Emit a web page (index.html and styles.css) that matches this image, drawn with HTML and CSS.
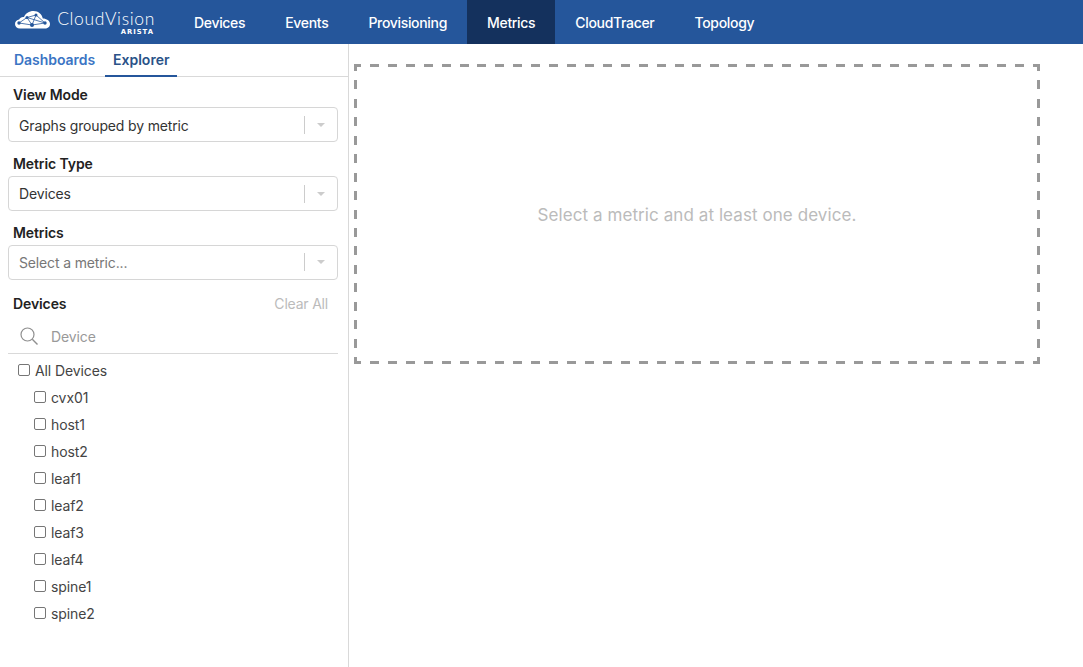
FILE: index.html
```html
<!DOCTYPE html>
<html lang="en">
<head>
<meta charset="utf-8">
<title>CloudVision Metrics</title>
<link rel="stylesheet" href="styles.css">
</head>
<body>
<header class="topbar">
  <div class="brand">
    <svg class="cloud" width="36" height="18" viewBox="0 0 36 18" aria-hidden="true">
      <path fill="#fff" d="M5 17.500C2 17.500 0 15.500 0 13C0 10.500 1.800 8.700 4.200 8.500C5 6.500 7 5.600 9 6C10.500 2.500 14 0 18.500 0C23.500 0 27 3.300 27.800 7.500C31.500 7.500 35 9.800 35 13C35 15.800 32.800 17.500 30 17.500Z"/>
      <path stroke="#25569b" stroke-width="0.800" fill="none" d="M4 12L12 6.500L21 4L17 14L4 12M12 6.500L17 14L30 12L21 4M12 6.500L30 12"/>
      <g fill="#25569b">
        <circle cx="4" cy="12" r="1.700"/>
        <circle cx="12" cy="6.500" r="1.500"/>
        <circle cx="21" cy="4" r="1.500"/>
        <circle cx="17" cy="14" r="2"/>
        <circle cx="30" cy="12" r="1.700"/>
      </g>
    </svg>
    <div class="wordmark">
      <span class="wordmark-name">CloudVision</span>
      <span class="wordmark-sub">ARISTA</span>
    </div>
  </div>
  <nav class="nav">
    <a class="nav-item">Devices</a>
    <a class="nav-item">Events</a>
    <a class="nav-item">Provisioning</a>
    <a class="nav-item nav-item-active">Metrics</a>
    <a class="nav-item">CloudTracer</a>
    <a class="nav-item">Topology</a>
  </nav>
</header>
<div class="main">
  <aside class="sidebar">
    <div class="tabs">
      <a class="tab tab-link">Dashboards</a>
      <a class="tab tab-active">Explorer</a>
    </div>
    <div class="field">
      <div class="field-label">View Mode</div>
      <div class="select"><span class="select-value">Graphs grouped by metric</span><span class="select-sep"></span><span class="select-arrow"></span></div>
    </div>
    <div class="field">
      <div class="field-label">Metric Type</div>
      <div class="select"><span class="select-value">Devices</span><span class="select-sep"></span><span class="select-arrow"></span></div>
    </div>
    <div class="field">
      <div class="field-label">Metrics</div>
      <div class="select"><span class="select-value select-placeholder">Select a metric...</span><span class="select-sep"></span><span class="select-arrow"></span></div>
    </div>
    <div class="devices-head">
      <span class="field-label">Devices</span>
      <span class="clear">Clear All</span>
    </div>
    <div class="search">
      <svg width="18" height="18" viewBox="0 0 18 18" aria-hidden="true"><circle cx="7.500" cy="7.500" r="6.500" fill="none" stroke="#8f8f8f" stroke-width="1.200"/><path d="M12.300 12.300L17.500 17.500" stroke="#8f8f8f" stroke-width="1.400" fill="none"/></svg>
      <span class="search-text">Device</span>
    </div>
    <ul class="tree">
      <li class="tree-row"><span class="check"></span>All Devices</li>
      <li class="tree-row tree-child"><span class="check"></span>cvx01</li>
      <li class="tree-row tree-child"><span class="check"></span>host1</li>
      <li class="tree-row tree-child"><span class="check"></span>host2</li>
      <li class="tree-row tree-child"><span class="check"></span>leaf1</li>
      <li class="tree-row tree-child"><span class="check"></span>leaf2</li>
      <li class="tree-row tree-child"><span class="check"></span>leaf3</li>
      <li class="tree-row tree-child"><span class="check"></span>leaf4</li>
      <li class="tree-row tree-child"><span class="check"></span>spine1</li>
      <li class="tree-row tree-child"><span class="check"></span>spine2</li>
    </ul>
  </aside>
  <main class="content">
    <div class="dropzone">Select a metric and at least one device.</div>
  </main>
</div>
</body>
</html>
```

FILE: styles.css
```css
* { box-sizing: border-box; }
html, body { margin: 0; height: 100%; }
body {
  font-family: Inter, "Liberation Sans", sans-serif;
  font-size: 14px;
  color: #333;
  background: #fff;
  display: flex;
  flex-direction: column;
  overflow: hidden;
}
.topbar {
  height: 44px;
  flex: none;
  background: #25569b;
  display: flex;
  color: #fff;
}
.brand {
  width: 174px;
  flex: none;
  display: flex;
  align-items: flex-start;
  padding: 11px 0 0 15px;
}
.cloud { display: block; flex: none; }
.wordmark {
  margin: -1px 0 0 7px;
  display: flex;
  flex-direction: column;
  align-items: flex-end;
  width: 97px;
}
.wordmark-name {
  font-family: Lato, sans-serif;
  font-weight: 300;
  font-size: 17.500px;
  letter-spacing: 0.650px;
  line-height: 18px;
  white-space: nowrap;
}
.wordmark-sub {
  font-family: "DejaVu Sans", sans-serif;
  font-weight: 700;
  font-size: 6.800px;
  line-height: 7px;
  letter-spacing: 1px;
  margin: 1px 1px 0 0;
}
.nav { display: flex; }
.nav-item {
  display: flex;
  align-items: center;
  padding: 0 20px;
  font-size: 14px;
  font-weight: 500;
  color: #fff;
  letter-spacing: -0.320px;
}
.nav-item-active { background: #14315d; }
.main { flex: 1; display: flex; min-height: 0; }
.sidebar {
  width: 349px;
  flex: none;
  border-right: 1px solid #d9d9d9;
  padding-bottom: 20px;
}
.tabs {
  height: 33px;
  border-bottom: 1px solid #d9d9d9;
  display: flex;
  padding-left: 5px;
}
.tab {
  padding: 0 9px;
  height: 32px;
  line-height: 32px;
  font-weight: 600;
  font-size: 14px;
  border-bottom: 2px solid transparent;
}
.tab-link { color: #3b75c4; letter-spacing: -0.050px; padding-right: 9.500px; }
.tab-active {
  color: #2a5288;
  border-bottom-color: #25569b;
  height: 33px;
  padding-left: 8.500px;
  padding-right: 8px;
}
.field { padding: 0 10px 0 8px; margin-top: 12.750px; }
.tabs + .field { margin-top: 9.250px; }
.field-label {
  font-weight: 600;
  font-size: 14px;
  color: #222;
  padding-left: 5px;
  line-height: 17px;
  letter-spacing: -0.100px;
  display: block;
}
.select {
  margin-top: 4px;
  height: 35px;
  border: 1px solid #d6d6d6;
  border-radius: 4px;
  display: flex;
  align-items: center;
  padding-left: 10px;
}
.select-value {
  flex: 1;
  font-size: 14px;
  color: #333;
  letter-spacing: -0.150px;
  padding-top: 0.500px;
}
.select-placeholder { color: #777; }
.select-sep { width: 1px; height: 18px; background: #ccc; }
.select-arrow {
  margin: 0 12px 0 12px;
  width: 0; height: 0;
  border-left: 4px solid transparent;
  border-right: 4px solid transparent;
  border-top: 4px solid #ccc;
}
.devices-head {
  display: flex;
  justify-content: space-between;
  margin-top: 15.250px;
  padding: 0 20px 0 8px;
  line-height: 17px;
}
.clear { color: #bbb; font-size: 14px; letter-spacing: -0.200px; }
.search {
  margin: 0 10px 0 8px;
  height: 42px;
  border-bottom: 1px solid #d9d9d9;
  display: flex;
  align-items: flex-start;
  padding: 15px 0 0 12px;
  gap: 13px;
  color: #999;
  line-height: 18px;
  letter-spacing: -0.100px;
}
.search-text { margin-top: 1px; }
.tree { list-style: none; margin: 3px 0 0; padding: 0 0 0 18px; }
.tree-row {
  height: 27px;
  display: flex;
  align-items: center;
  color: #444;
  font-size: 14px;
  letter-spacing: -0.100px;
}
.tree-child { padding-left: 16px; }
.check {
  width: 12px; height: 12px;
  border: 1px solid #767676;
  border-radius: 2px;
  background: #fff;
  margin-right: 5px;
  position: relative;
  top: -1px;
}
.content { flex: 1; padding: 20px 43px 0 5px; }
.dropzone {
  height: 300px;
  padding-top: 1px;
  background-image:
    repeating-linear-gradient(to right, #999 -2px 7px, transparent 7px 15.920px),
    repeating-linear-gradient(to right, #999 -2px 7px, transparent 7px 15.920px),
    repeating-linear-gradient(to bottom, #999 -2px 7px, transparent 7px 16.440px),
    repeating-linear-gradient(to bottom, #999 -2px 7px, transparent 7px 16.440px);
  background-size: 100% 3px, 100% 3px, 3px 100%, 3px 100%;
  background-position: top left, bottom left, top left, top right;
  background-repeat: no-repeat;
  display: flex;
  align-items: center;
  justify-content: center;
  color: #bbb;
  font-size: 17px;
  letter-spacing: 0.080px;
}
```
